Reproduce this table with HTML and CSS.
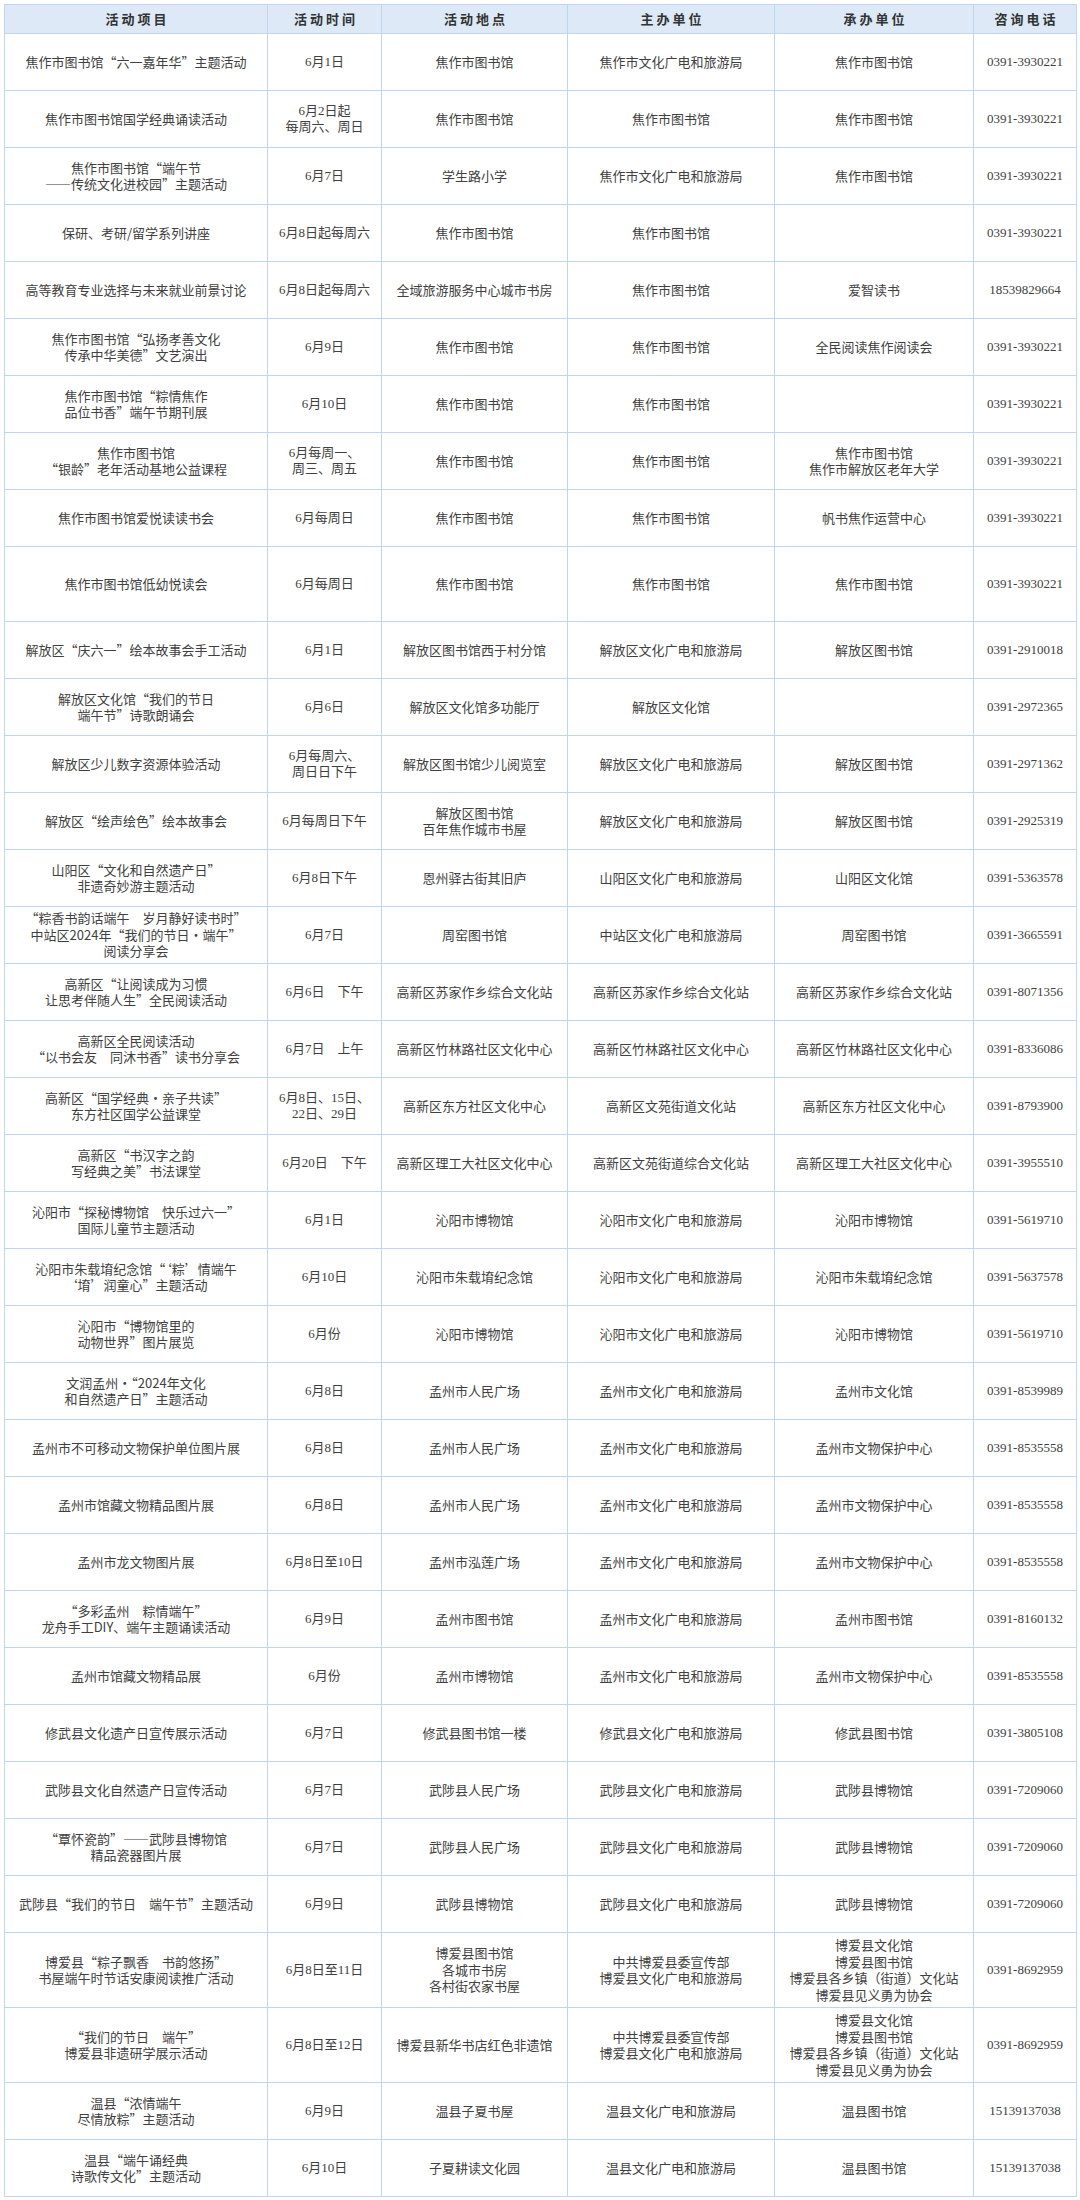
FILE: index.html
```html
<!DOCTYPE html>
<html lang="zh-CN">
<head>
<meta charset="utf-8">
<title>活动安排</title>
<link rel="stylesheet" href="styles.css">
</head>
<body>
<div class="page">
<table class="events">
<colgroup>
<col class="c-name"><col class="c-time"><col class="c-place"><col class="c-host"><col class="c-org"><col class="c-tel">
</colgroup>
<thead>
<tr class="head"><th>活动项目</th><th>活动时间</th><th>活动地点</th><th>主办单位</th><th>承办单位</th><th>咨询电话</th></tr>
</thead>
<tbody>
<tr><td>焦作市图书馆“六一嘉年华”主题活动</td><td class="num">6月1日</td><td>焦作市图书馆</td><td>焦作市文化广电和旅游局</td><td>焦作市图书馆</td><td class="num">0391-3930221</td></tr>
<tr><td>焦作市图书馆国学经典诵读活动</td><td class="num">6月2日起<br>每周六、周日</td><td>焦作市图书馆</td><td>焦作市图书馆</td><td>焦作市图书馆</td><td class="num">0391-3930221</td></tr>
<tr><td>焦作市图书馆“端午节<br>——传统文化进校园”主题活动</td><td class="num">6月7日</td><td>学生路小学</td><td>焦作市文化广电和旅游局</td><td>焦作市图书馆</td><td class="num">0391-3930221</td></tr>
<tr><td>保研、考研/留学系列讲座</td><td class="num">6月8日起每周六</td><td>焦作市图书馆</td><td>焦作市图书馆</td><td></td><td class="num">0391-3930221</td></tr>
<tr><td>高等教育专业选择与未来就业前景讨论</td><td class="num">6月8日起每周六</td><td>全域旅游服务中心城市书房</td><td>焦作市图书馆</td><td>爱智读书</td><td class="num">18539829664</td></tr>
<tr><td>焦作市图书馆“弘扬孝善文化<br>传承中华美德”文艺演出</td><td class="num">6月9日</td><td>焦作市图书馆</td><td>焦作市图书馆</td><td>全民阅读焦作阅读会</td><td class="num">0391-3930221</td></tr>
<tr><td>焦作市图书馆“粽情焦作<br>品位书香”端午节期刊展</td><td class="num">6月10日</td><td>焦作市图书馆</td><td>焦作市图书馆</td><td></td><td class="num">0391-3930221</td></tr>
<tr><td>焦作市图书馆<br>“银龄”老年活动基地公益课程</td><td class="num">6月每周一、<br>周三、周五</td><td>焦作市图书馆</td><td>焦作市图书馆</td><td>焦作市图书馆<br>焦作市解放区老年大学</td><td class="num">0391-3930221</td></tr>
<tr><td>焦作市图书馆爱悦读读书会</td><td class="num">6月每周日</td><td>焦作市图书馆</td><td>焦作市图书馆</td><td>帆书焦作运营中心</td><td class="num">0391-3930221</td></tr>
<tr class="tall"><td>焦作市图书馆低幼悦读会</td><td class="num">6月每周日</td><td>焦作市图书馆</td><td>焦作市图书馆</td><td>焦作市图书馆</td><td class="num">0391-3930221</td></tr>
<tr><td>解放区“庆六一”绘本故事会手工活动</td><td class="num">6月1日</td><td>解放区图书馆西于村分馆</td><td>解放区文化广电和旅游局</td><td>解放区图书馆</td><td class="num">0391-2910018</td></tr>
<tr><td>解放区文化馆“我们的节日<br>端午节”诗歌朗诵会</td><td class="num">6月6日</td><td>解放区文化馆多功能厅</td><td>解放区文化馆</td><td></td><td class="num">0391-2972365</td></tr>
<tr><td>解放区少儿数字资源体验活动</td><td class="num">6月每周六、<br>周日日下午</td><td>解放区图书馆少儿阅览室</td><td>解放区文化广电和旅游局</td><td>解放区图书馆</td><td class="num">0391-2971362</td></tr>
<tr><td>解放区“绘声绘色”绘本故事会</td><td class="num">6月每周日下午</td><td>解放区图书馆<br>百年焦作城市书屋</td><td>解放区文化广电和旅游局</td><td>解放区图书馆</td><td class="num">0391-2925319</td></tr>
<tr><td>山阳区“文化和自然遗产日”<br>非遗奇妙游主题活动</td><td class="num">6月8日下午</td><td>恩州驿古街其旧庐</td><td>山阳区文化广电和旅游局</td><td>山阳区文化馆</td><td class="num">0391-5363578</td></tr>
<tr><td>“粽香书韵话端午　岁月静好读书时”<br>中站区2024年“我们的节日·端午”<br>阅读分享会</td><td class="num">6月7日</td><td>周窑图书馆</td><td>中站区文化广电和旅游局</td><td>周窑图书馆</td><td class="num">0391-3665591</td></tr>
<tr><td>高新区“让阅读成为习惯<br>让思考伴随人生”全民阅读活动</td><td class="num">6月6日　下午</td><td>高新区苏家作乡综合文化站</td><td>高新区苏家作乡综合文化站</td><td>高新区苏家作乡综合文化站</td><td class="num">0391-8071356</td></tr>
<tr><td>高新区全民阅读活动<br>“以书会友　同沐书香”读书分享会</td><td class="num">6月7日　上午</td><td>高新区竹林路社区文化中心</td><td>高新区竹林路社区文化中心</td><td>高新区竹林路社区文化中心</td><td class="num">0391-8336086</td></tr>
<tr><td>高新区“国学经典·亲子共读”<br>东方社区国学公益课堂</td><td class="num">6月8日、15日、<br>22日、29日</td><td>高新区东方社区文化中心</td><td>高新区文苑街道文化站</td><td>高新区东方社区文化中心</td><td class="num">0391-8793900</td></tr>
<tr><td>高新区“书汉字之韵<br>写经典之美”书法课堂</td><td class="num">6月20日　下午</td><td>高新区理工大社区文化中心</td><td>高新区文苑街道综合文化站</td><td>高新区理工大社区文化中心</td><td class="num">0391-3955510</td></tr>
<tr><td>沁阳市“探秘博物馆　快乐过六一”<br>国际儿童节主题活动</td><td class="num">6月1日</td><td>沁阳市博物馆</td><td>沁阳市文化广电和旅游局</td><td>沁阳市博物馆</td><td class="num">0391-5619710</td></tr>
<tr><td>沁阳市朱载堉纪念馆“‘粽’情端午<br>‘堉’润童心”主题活动</td><td class="num">6月10日</td><td>沁阳市朱载堉纪念馆</td><td>沁阳市文化广电和旅游局</td><td>沁阳市朱载堉纪念馆</td><td class="num">0391-5637578</td></tr>
<tr><td>沁阳市“博物馆里的<br>动物世界”图片展览</td><td class="num">6月份</td><td>沁阳市博物馆</td><td>沁阳市文化广电和旅游局</td><td>沁阳市博物馆</td><td class="num">0391-5619710</td></tr>
<tr><td>文润孟州·“2024年文化<br>和自然遗产日”主题活动</td><td class="num">6月8日</td><td>孟州市人民广场</td><td>孟州市文化广电和旅游局</td><td>孟州市文化馆</td><td class="num">0391-8539989</td></tr>
<tr><td>孟州市不可移动文物保护单位图片展</td><td class="num">6月8日</td><td>孟州市人民广场</td><td>孟州市文化广电和旅游局</td><td>孟州市文物保护中心</td><td class="num">0391-8535558</td></tr>
<tr><td>孟州市馆藏文物精品图片展</td><td class="num">6月8日</td><td>孟州市人民广场</td><td>孟州市文化广电和旅游局</td><td>孟州市文物保护中心</td><td class="num">0391-8535558</td></tr>
<tr><td>孟州市龙文物图片展</td><td class="num">6月8日至10日</td><td>孟州市泓莲广场</td><td>孟州市文化广电和旅游局</td><td>孟州市文物保护中心</td><td class="num">0391-8535558</td></tr>
<tr><td>“多彩孟州　粽情端午”<br>龙舟手工DIY、端午主题诵读活动</td><td class="num">6月9日</td><td>孟州市图书馆</td><td>孟州市文化广电和旅游局</td><td>孟州市图书馆</td><td class="num">0391-8160132</td></tr>
<tr><td>孟州市馆藏文物精品展</td><td class="num">6月份</td><td>孟州市博物馆</td><td>孟州市文化广电和旅游局</td><td>孟州市文物保护中心</td><td class="num">0391-8535558</td></tr>
<tr><td>修武县文化遗产日宣传展示活动</td><td class="num">6月7日</td><td>修武县图书馆一楼</td><td>修武县文化广电和旅游局</td><td>修武县图书馆</td><td class="num">0391-3805108</td></tr>
<tr><td>武陟县文化自然遗产日宣传活动</td><td class="num">6月7日</td><td>武陟县人民广场</td><td>武陟县文化广电和旅游局</td><td>武陟县博物馆</td><td class="num">0391-7209060</td></tr>
<tr><td>“覃怀瓷韵”——武陟县博物馆<br>精品瓷器图片展</td><td class="num">6月7日</td><td>武陟县人民广场</td><td>武陟县文化广电和旅游局</td><td>武陟县博物馆</td><td class="num">0391-7209060</td></tr>
<tr><td>武陟县“我们的节日　端午节”主题活动</td><td class="num">6月9日</td><td>武陟县博物馆</td><td>武陟县文化广电和旅游局</td><td>武陟县博物馆</td><td class="num">0391-7209060</td></tr>
<tr class="tall"><td>博爱县“粽子飘香　书韵悠扬”<br>书屋端午时节话安康阅读推广活动</td><td class="num">6月8日至11日</td><td>博爱县图书馆<br>各城市书房<br>各村街农家书屋</td><td>中共博爱县委宣传部<br>博爱县文化广电和旅游局</td><td>博爱县文化馆<br>博爱县图书馆<br>博爱县各乡镇（街道）文化站<br>博爱县见义勇为协会</td><td class="num">0391-8692959</td></tr>
<tr class="tall"><td>“我们的节日　端午”<br>博爱县非遗研学展示活动</td><td class="num">6月8日至12日</td><td>博爱县新华书店红色非遗馆</td><td>中共博爱县委宣传部<br>博爱县文化广电和旅游局</td><td>博爱县文化馆<br>博爱县图书馆<br>博爱县各乡镇（街道）文化站<br>博爱县见义勇为协会</td><td class="num">0391-8692959</td></tr>
<tr><td>温县“浓情端午<br>尽情放粽”主题活动</td><td class="num">6月9日</td><td>温县子夏书屋</td><td>温县文化广电和旅游局</td><td>温县图书馆</td><td class="num">15139137038</td></tr>
<tr><td>温县“端午诵经典<br>诗歌传文化”主题活动</td><td class="num">6月10日</td><td>子夏耕读文化园</td><td>温县文化广电和旅游局</td><td>温县图书馆</td><td class="num">15139137038</td></tr>
</tbody>
</table>
</div>
</body>
</html>
```

FILE: styles.css
```css
html, body {
  margin: 0;
  padding: 0;
  background: #ffffff;
}

.page {
  padding: 4px 4px 0 4px;
}

.events {
  border-collapse: collapse;
  table-layout: fixed;
  width: 1072px;
  font-family: "Noto Sans CJK SC", "Liberation Serif", sans-serif;
  font-size: 13px;
  line-height: 16.5px;
  color: #404040;
}

.c-name { width: 263px; }
.c-time { width: 114px; }
.c-place { width: 186px; }
.c-host { width: 207px; }
.c-org { width: 199px; }
.c-tel { width: 103px; }

.events th,
.events td {
  border: 1px solid #bfd6ee;
  padding: 0;
  text-align: center;
  vertical-align: middle;
  white-space: nowrap;
  overflow: hidden;
}

.head {
  height: 29px;
  background: #dde9f6;
}

.head th {
  font-weight: 700;
  letter-spacing: 3px;
  color: #333333;
  padding-left: 3px;
}

.events tbody tr {
  height: 57px;
}

.events tbody tr.tall {
  height: 75px;
}

.events td.num {
  font-family: "Liberation Serif", "Noto Sans CJK SC", serif;
  font-size: 13px;
}
```
